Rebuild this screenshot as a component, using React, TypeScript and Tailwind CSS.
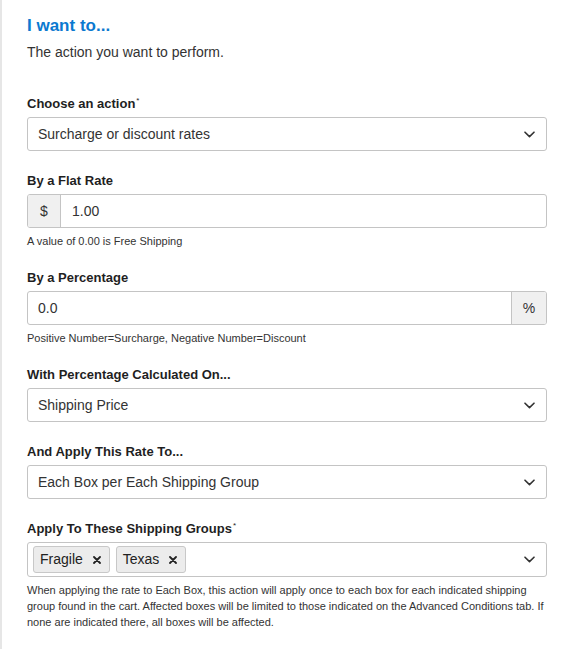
import type { ReactNode } from "react"

// Chevron drawn small and thin, as in the native select look of the reference.
function Chevron() {
  return (
    <svg width="11" height="7" viewBox="0 0 11 7" fill="none" className="shrink-0">
      <path d="M1 1.2 5.5 5.6 10 1.2" stroke="#333" strokeWidth="1.6" strokeLinecap="round" strokeLinejoin="round" />
    </svg>
  )
}

function Label({ children, required }: { children: ReactNode; required?: boolean }) {
  return (
    <div className="mb-[5px] flex items-start text-[13px] font-bold leading-[16px] text-[#1f1f1f]">
      {children}
      {required ? <span className="ml-[1px] text-[8px] font-normal leading-[10px]">*</span> : null}
    </div>
  )
}

function Help({ children }: { children: ReactNode }) {
  return <p className="mt-[5px] text-[11px] leading-[16px] text-[#333]">{children}</p>
}

function Select({ value }: { value: string }) {
  return (
    <div className="flex h-[34px] items-center justify-between rounded-[3px] border border-[#c4c4c4] bg-white pl-[10px] pr-[11px] text-[14px] text-[#333]">
      <span>{value}</span>
      <Chevron />
    </div>
  )
}

function Tag({ text }: { text: string }) {
  return (
    <span className="flex h-[27px] items-center gap-[10px] rounded-[3px] border border-[#c8c8c8] bg-[#ececec] pl-[6px] pr-[8px] text-[14px] text-[#222]">
      {text}
      <svg width="8" height="8" viewBox="0 0 8 8">
        <path d="M1 1 7 7M7 1 1 7" stroke="#222" strokeWidth="1.8" strokeLinecap="round" />
      </svg>
    </span>
  )
}

export default function App() {
  return (
    <div
      className="min-h-[649px] border-l-2 border-[#e6e6e6] bg-white pl-[25px] pr-[24px] pt-[16px]"
      style={{ fontFamily: '"Liberation Sans", Arial, sans-serif' }}
    >
      <h2 className="text-[17px] font-bold leading-[20px] text-[#0b79d0]">I want to...</h2>
      <p className="mt-[7px] text-[14px] leading-[18px] text-[#333]">The action you want to perform.</p>

      <div className="mt-[35px]">
        <Label required>Choose an action</Label>
        <Select value="Surcharge or discount rates" />
      </div>

      <div className="mt-[22px]">
        <Label>By a Flat Rate</Label>
        <div className="flex h-[34px] overflow-hidden rounded-[3px] border border-[#c4c4c4] text-[14px] text-[#333]">
          <span className="flex w-[33px] items-center justify-center border-r border-[#c4c4c4] bg-[#f0f0f0]">$</span>
          <span className="flex items-center pl-[11px]">1.00</span>
        </div>
        <Help>A value of 0.00 is Free Shipping</Help>
      </div>

      <div className="mt-[21px]">
        <Label>By a Percentage</Label>
        <div className="flex h-[34px] overflow-hidden rounded-[3px] border border-[#c4c4c4] text-[14px] text-[#333]">
          <span className="flex flex-1 items-center pl-[10px]">0.0</span>
          <span className="flex w-[35px] items-center justify-center border-l border-[#c4c4c4] bg-[#f0f0f0]">%</span>
        </div>
        <Help>Positive Number=Surcharge, Negative Number=Discount</Help>
      </div>

      <div className="mt-[21px]">
        <Label>With Percentage Calculated On...</Label>
        <Select value="Shipping Price" />
      </div>

      <div className="mt-[22px]">
        <Label>And Apply This Rate To...</Label>
        <Select value="Each Box per Each Shipping Group" />
      </div>

      <div className="mt-[22px]">
        <Label required>Apply To These Shipping Groups</Label>
        <div className="flex h-[35px] items-center justify-between rounded-[3px] border border-[#c4c4c4] pl-[5px] pr-[11px]">
          <div className="flex gap-[6px]">
            <Tag text="Fragile" />
            <Tag text="Texas" />
          </div>
          <Chevron />
        </div>
        <Help>
          When applying the rate to Each Box, this action will apply once to each box for each indicated shipping
          group found in the cart. Affected boxes will be limited to those indicated on the Advanced Conditions tab. If
          none are indicated there, all boxes will be affected.
        </Help>
      </div>
    </div>
  )
}
